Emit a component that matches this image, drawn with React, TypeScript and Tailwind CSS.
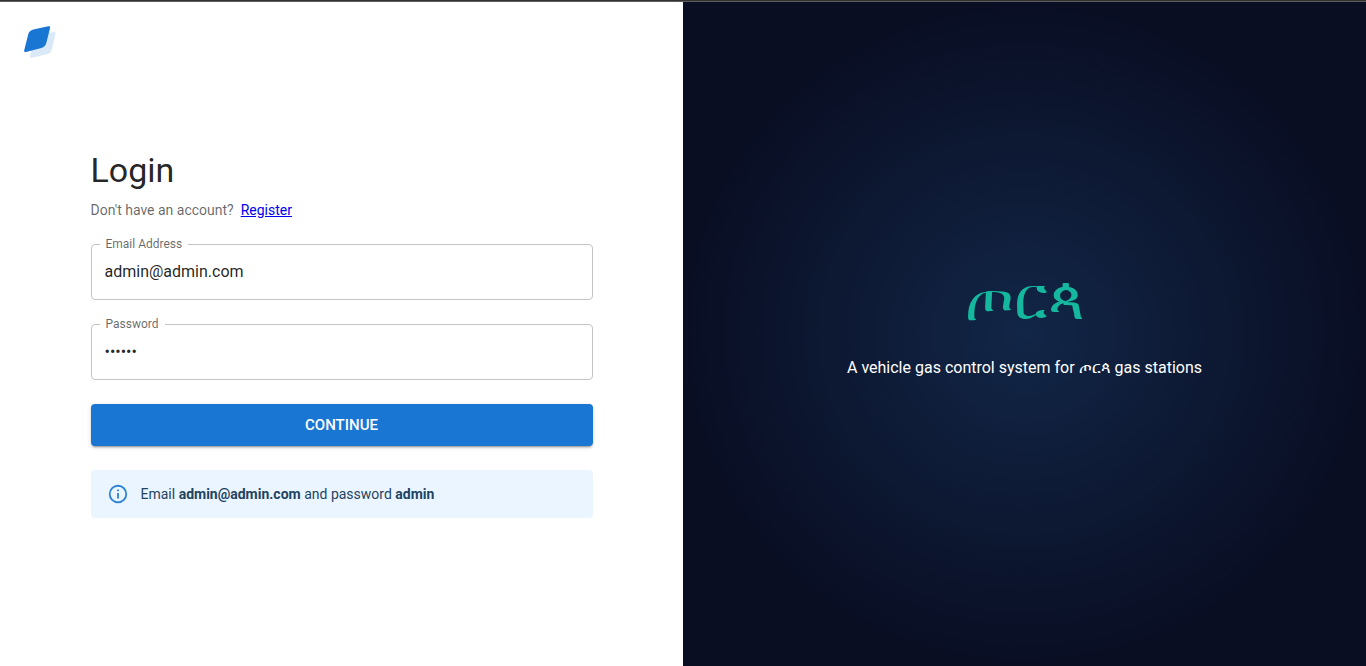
type FieldProps = {
  id: string;
  label: string;
  type: string;
  value: string;
  autoComplete: string;
};

function TextField({ id, label, type, value, autoComplete }: FieldProps) {
  return (
    <div className="relative">
      <label
        htmlFor={id}
        className="absolute -top-2 left-[9px] bg-white px-[6px] text-xs leading-4 text-black/60"
      >
        {label}
      </label>
      <input
        id={id}
        name={id}
        type={type}
        defaultValue={value}
        autoComplete={autoComplete}
        className="block h-14 w-full rounded border border-[#c4c4c4] bg-white px-[13px] pb-[2px] text-base text-black/87 outline-none focus:border-[#1976d2]"
      />
    </div>
  );
}

function Logo() {
  return (
    <svg viewBox="0 0 32 32" className="size-8" fill="#1976d2" aria-hidden="true">
      <path
        opacity="0.16"
        d="M10.6 12.6C11.2 10.8 12.6 9.7 14.4 9.2L29.6 5.9C31 5.6 31.8 6.4 31.5 7.8L27.9 23.2C27.2 25.8 25.4 27.4 23 28.2L7.9 31.8C6.4 32.1 5.7 31.4 6 30Z"
      />
      <path d="M4.4 7.8C5.1 5.4 7 4.2 9.2 3.5L24.3 .3C25.7 0 26.4 .7 26.1 2.1L22.3 17C21.6 19.5 19.9 21.3 17.4 22.1L2.1 26.1C.7 26.4 -.1 25.7 .2 24.3Z" />
    </svg>
  );
}

function InfoIcon() {
  return (
    <svg viewBox="0 0 24 24" className="size-[22px] shrink-0 opacity-90" fill="#1976d2" aria-hidden="true">
      <path d="M11,9H13V7H11M12,20C7.59,20 4,16.41 4,12C4,7.59 7.59,4 12,4C16.41,4 20,7.59 20,12C20,16.41 16.41,20 12,20M12,2A10,10 0 0,0 2,12A10,10 0 0,0 12,22A10,10 0 0,0 22,12A10,10 0 0,0 12,2M11,17H13V11H11V17Z" />
    </svg>
  );
}

export default function App() {
  return (
    <div className="flex min-h-screen flex-col border-t border-[#323232] bg-white font-[Roboto,sans-serif] antialiased">
      <main className="grid flex-1 border-t border-[#5c5c5c] lg:grid-cols-2">
        <section className="relative flex flex-col items-center justify-center">
          <header className="absolute top-0 left-0 p-6">
            <a href="#home" aria-label="Home" className="block">
              <Logo />
            </a>
          </header>
          <div className="w-full max-w-[550px] px-6 py-24">
            <h1 className="text-[34px] leading-10 text-black/87">Login</h1>
            <p className="mt-[10px] text-sm leading-5 text-black/60">
              Don't have an account? &nbsp;
              <a href="#register" className="text-[#0000ee] underline">
                Register
              </a>
            </p>
            <form className="mt-6 flex flex-col gap-6">
              <TextField
                id="email"
                label="Email Address"
                type="email"
                value="admin@admin.com"
                autoComplete="email"
              />
              <TextField
                id="password"
                label="Password"
                type="password"
                value="123123"
                autoComplete="current-password"
              />
              <button
                type="button"
                className="h-[42px] w-full rounded bg-[#1976d2] text-[15px] font-medium text-white uppercase shadow-[0_3px_1px_-2px_rgba(0,0,0,0.2),0_2px_2px_0_rgba(0,0,0,0.14),0_1px_5px_0_rgba(0,0,0,0.12)] hover:bg-[#1565c0]"
              >
                Continue
              </button>
              <div
                role="note"
                className="flex items-center gap-3 rounded bg-[#ebf5ff] px-4 py-[13px] text-sm leading-5 text-[#1e4462]"
              >
                <InfoIcon />
                <p>
                  Email <b className="font-bold">admin@admin.com</b> and password{" "}
                  <b className="font-bold">admin</b>
                </p>
              </div>
            </form>
          </div>
        </section>
        <section className="flex flex-col items-center justify-center bg-[radial-gradient(50%_50%_at_50%_50%,#122647_0%,#090e23_100%)] p-6 pb-12 text-center text-white">
          <h2 lang="am" className="text-[61px] leading-[72px] text-[#15b79e]">
            ጦርጳ
          </h2>
          <p className="mt-5 text-base leading-7">
            A vehicle gas control system for <span lang="am">ጦርጳ</span> gas stations
          </p>
        </section>
      </main>
    </div>
  );
}
